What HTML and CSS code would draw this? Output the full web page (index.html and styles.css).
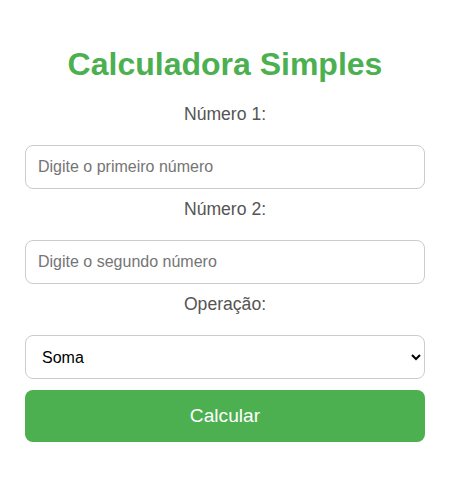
FILE: index.html
```html
<!DOCTYPE html>
<html lang="pt">
<head>
<meta charset="utf-8">
<title>Calculadora Simples</title>
<link rel="stylesheet" href="styles.css">
</head>
<body>
  <div class="container">
    <h1 class="title">Calculadora Simples</h1>
    <label class="label" for="n1">Número 1:</label>
    <input class="field" id="n1" type="number" placeholder="Digite o primeiro número">
    <label class="label" for="n2">Número 2:</label>
    <input class="field" id="n2" type="number" placeholder="Digite o segundo número">
    <label class="label" for="op">Operação:</label>
    <select class="field select" id="op">
      <option>Soma</option>
      <option>Subtração</option>
      <option>Multiplicação</option>
      <option>Divisão</option>
    </select>
    <button class="btn" type="button">Calcular</button>
  </div>
</body>
</html>
```

FILE: styles.css
```css
html, body {
  margin: 0;
  padding: 0;
  background: #ffffff;
}

body {
  font-family: "Liberation Sans", Arial, sans-serif;
}

.container {
  width: 400px;
  padding: 46px 29px 0 25px;
  display: flex;
  flex-direction: column;
  align-items: stretch;
}

.title {
  margin: 0 0 21px 0;
  font-size: 32px;
  line-height: 37px;
  font-weight: bold;
  color: #4caf50;
  text-align: center;
}

.label {
  display: block;
  font-size: 17.6px;
  line-height: 20px;
  color: #555555;
  text-align: center;
  margin-bottom: 21px;
}

.field {
  box-sizing: border-box;
  width: 100%;
  height: 44px;
  margin: 0 0 10px 0;
  padding: 0 12px;
  border: 1px solid #cccccc;
  border-radius: 8px;
  font-family: "Liberation Sans", Arial, sans-serif;
  font-size: 16px;
  color: #000000;
  background: #ffffff;
  outline: none;
}

.field::placeholder {
  color: #757575;
}

.select {
  margin-bottom: 11px;
}

.btn {
  box-sizing: border-box;
  width: 100%;
  height: 52px;
  border: none;
  border-radius: 8px;
  background: #4caf50;
  color: #ffffff;
  font-family: "Liberation Sans", Arial, sans-serif;
  font-size: 19.2px;
  cursor: pointer;
}
```
